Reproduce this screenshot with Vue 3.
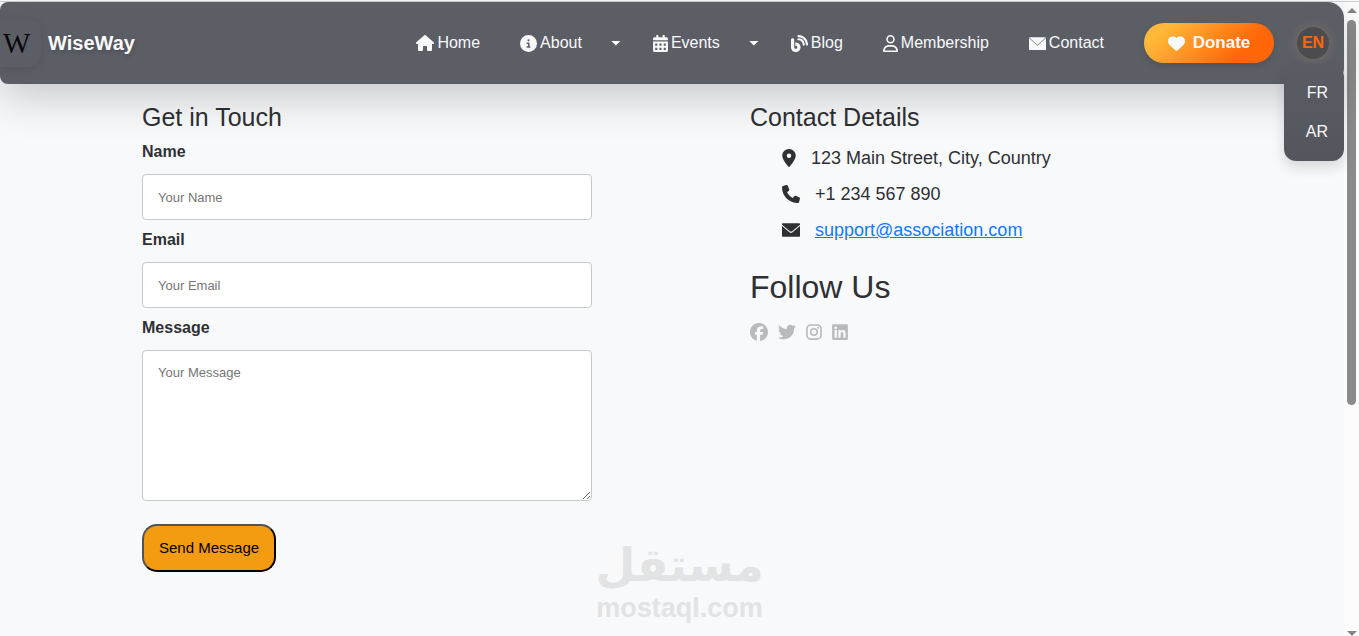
<script setup>
import { ref } from 'vue'

const house = 'M575.8 255.5c0 18-15 32.1-32 32.1h-32l.7 160.2c0 2.7-.2 5.4-.5 8.1V472c0 22.1-17.9 40-40 40H456c-1.1 0-2.2 0-3.3-.1c-1.4 .1-2.8 .1-4.2 .1H416 392c-22.1 0-40-17.9-40-40V448 384c0-17.7-14.3-32-32-32H256c-17.7 0-32 14.3-32 32v64 24c0 22.1-17.9 40-40 40H160 128.1c-1.5 0-3-.1-4.5-.2c-1.2 .1-2.4 .2-3.6 .2H104c-22.1 0-40-17.9-40-40V360c0-.9 0-1.9 .1-2.8V287.6H32c-18 0-32-14-32-32.1c0-9 3-17 10-24L266.4 8c7-7 15-8 22-8s15 2 21 7L564.8 231.5c8 7 12 15 11 24z'
const info = 'M256 512A256 256 0 1 0 256 0a256 256 0 1 0 0 512zM216 336h24V272H216c-13.3 0-24-10.7-24-24s10.7-24 24-24h48c13.3 0 24 10.7 24 24v88h8c13.3 0 24 10.7 24 24s-10.7 24-24 24H216c-13.3 0-24-10.7-24-24s10.7-24 24-24zm40-208a32 32 0 1 1 0 64 32 32 0 1 1 0-64z'
const calendar = 'M0 464c0 26.5 21.5 48 48 48h352c26.5 0 48-21.5 48-48V192H0zM64 256h64v64H64zM192 256h64v64h-64zM320 256h64v64h-64zM64 384h64v64H64zM192 384h64v64h-64zM320 384h64v64h-64zM400 64h-48V16c0-8.800-7.200-16-16-16h-32c-8.800 0-16 7.200-16 16v48H160V16c0-8.800-7.200-16-16-16h-32c-8.800 0-16 7.200-16 16v48H48C21.500 64 0 85.500 0 112v48h448v-48c0-26.500-21.500-48-48-48z'
const blog = 'M192 32c0 17.7 14.3 32 32 32c123.7 0 224 100.3 224 224c0 17.7 14.3 32 32 32s32-14.3 32-32C512 128.9 383.1 0 224 0c-17.7 0-32 14.3-32 32zm0 96c0 17.7 14.3 32 32 32c70.7 0 128 57.3 128 128c0 17.7 14.3 32 32 32s32-14.3 32-32c0-106-86-192-192-192c-17.7 0-32 14.3-32 32zM96 144c0-26.5-21.5-48-48-48S0 117.5 0 144V368c0 79.5 64.5 144 144 144s144-64.5 144-144s-64.5-144-144-144H128v96h16c26.5 0 48 21.5 48 48s-21.5 48-48 48s-48-21.5-48-48V144z'
const user = 'M304 128a80 80 0 1 0 -160 0 80 80 0 1 0 160 0zM96 128a128 128 0 1 1 256 0A128 128 0 1 1 96 128zM49.3 464H398.7c-8.9-63.3-63.3-112-129-112H178.3c-65.7 0-120.1 48.7-129 112zM0 482.3C0 383.8 79.8 304 178.3 304h91.4C368.2 304 448 383.8 448 482.3c0 16.400-13.300 29.700-29.700 29.700H29.700C13.300 512 0 498.700 0 482.300z'
const mailThin = 'M8 64H504V76L256 300L8 76zM0 88L256 322L512 88V448H0z'
const mail = 'M16 64H496L512 80V104L290 290Q256 314 222 290L0 104V80zM0 142L222 326Q256 350 290 326L512 142V432L496 448H16L0 432z'
const heart = 'M47.6 300.4L228.3 469.1c7.5 7 17.4 10.900 27.700 10.900s20.200-3.900 27.700-10.900L464.400 300.400c30.400-28.300 47.600-68 47.600-109.500v-5.800c0-69.900-50.500-129.500-119.400-141C347 36.500 300.600 51.400 268 84L256 96 244 84c-32.600-32.600-79-47.500-124.600-39.900C50.500 55.600 0 115.200 0 185.100v5.800c0 41.500 17.200 81.200 47.600 109.500z'
const pin = 'M215.7 499.2C267 435 384 279.4 384 192C384 86 298 0 192 0S0 86 0 192c0 87.4 117 243 168.3 307.2c12.3 15.3 35.1 15.3 47.4 0zM192 128a64 64 0 1 1 0 128 64 64 0 1 1 0-128z'
const phone = 'M164.9 24.6c-7.7-18.6-28-28.5-47.4-23.2l-88 24C12.1 30.2 0 46 0 64C0 311.4 200.6 512 448 512c18 0 33.8-12.1 38.6-29.5l24-88c5.3-19.4-4.6-39.7-23.2-47.4l-96-40c-16.3-6.8-35.2-2.1-46.3 11.6L304.7 368C234.3 334.7 177.3 277.7 144 207.3L193.3 167c13.7-11.2 18.4-30 11.6-46.3l-40-96z'
const facebook = 'M512 256C512 114.6 397.4 0 256 0S0 114.6 0 256C0 376 82.7 476.8 194.2 504.5V334.2H141.4V256h52.8V222.3c0-87.1 39.4-127.5 125-127.5c16.2 0 44.2 3.2 55.7 6.4V172c-6-.6-16.5-1-29.6-1c-42 0-58.2 15.9-58.2 57.2V256h83.6l-14.4 78.2H287V510.1C413.8 494.8 512 386.9 512 256z'
const twitter = 'M459.37 151.716c.325 4.548.325 9.097.325 13.645 0 138.72-105.583 298.558-298.558 298.558-59.452 0-114.68-17.219-161.137-47.106 8.447.974 16.568 1.299 25.34 1.299 49.055 0 94.213-16.568 130.274-44.832-46.132-.975-84.792-31.188-98.112-72.772 6.498.974 12.995 1.624 19.818 1.624 9.421 0 18.843-1.3 27.614-3.573-48.081-9.747-84.143-51.98-84.143-102.985v-1.299c13.969 7.797 30.214 12.67 47.431 13.319-28.264-18.843-46.781-51.005-46.781-87.391 0-19.492 5.197-37.36 14.294-52.954 51.655 63.675 129.3 105.258 216.365 109.807-1.624-7.797-2.599-15.918-2.599-24.04 0-57.828 46.782-104.934 104.934-104.934 30.213 0 57.502 12.67 76.67 33.137 23.715-4.548 46.456-13.32 66.599-25.34-7.798 24.366-24.366 44.833-46.132 57.827 21.117-2.273 41.584-8.122 60.426-16.243-14.292 20.791-32.161 39.308-52.628 54.253z'
const instagram = 'M132 32H316A132 132 0 0 1 448 164V348A132 132 0 0 1 316 480H132A132 132 0 0 1 0 348V164A132 132 0 0 1 132 32zM132 78A86 86 0 0 0 46 164V348A86 86 0 0 0 132 434H316A86 86 0 0 0 402 348V164A86 86 0 0 0 316 78zM224 141a115 115 0 1 1 0 230a115 115 0 1 1 0-230zM224 185a71 71 0 1 0 0 142a71 71 0 1 0 0-142zM343 108a29 29 0 1 1 0 58a29 29 0 1 1 0-58z'
const linkedin = 'M416 32H31.9C14.3 32 0 46.5 0 64.3v383.4C0 465.5 14.3 480 31.9 480H416c17.6 0 32-14.5 32-32.3V64.3c0-17.8-14.4-32.3-32-32.3zM135.4 416H69V202.2h66.5V416zm-33.2-243c-21.3 0-38.5-17.3-38.5-38.5S80.9 96 102.2 96c21.2 0 38.5 17.3 38.5 38.5 0 21.3-17.2 38.5-38.5 38.5zm282.1 243h-66.4V312c0-24.8-.5-56.7-34.5-56.7-34.6 0-39.9 27-39.9 54.9V416h-66.4V202.2h63.7v29.2h.9c8.9-16.8 30.6-34.5 62.2-34.5 66.5 0 78.9 43.8 78.9 100.9V416z'

const links = [
  { label: 'Home', path: house, box: '0 0 576 512', size: 'w18' },
  { label: 'About', path: info, box: '0 0 512 512', size: 'w17', menu: true },
  { label: 'Events', path: calendar, box: '0 0 448 512', size: 'w15', menu: true },
  { label: 'Blog', path: blog, box: '0 0 512 512', size: 'w17' },
  { label: 'Membership', path: user, box: '0 0 448 512', size: 'w15' },
  { label: 'Contact', path: mailThin, box: '0 0 512 512', size: 'w17' },
]
const languages = ['FR', 'AR']
const socials = [
  { label: 'Facebook', path: facebook, box: '0 0 512 512', size: 'w18' },
  { label: 'Twitter', path: twitter, box: '0 0 512 512', size: 'w18' },
  { label: 'Instagram', path: instagram, box: '0 0 448 512', size: 'w16' },
  { label: 'LinkedIn', path: linkedin, box: '0 0 448 512', size: 'w16' },
]
const form = ref({ name: '', email: '', message: '' })
</script>

<template>
  <div class="window">
    <div class="edge"></div>
    <div class="page">
      <header class="navbar">
        <a class="brand" href="#">
          <span class="logo">W</span>
          <span class="brand-name">WiseWay</span>
        </a>
        <nav class="links">
          <div v-for="l in links" :key="l.label" class="item">
            <a class="link" href="#">
              <svg class="icon" :class="l.size" :viewBox="l.box" aria-hidden="true"><path :d="l.path" fill-rule="evenodd" /></svg>
              <span>{{ l.label }}</span>
            </a>
            <button v-if="l.menu" class="toggle" type="button" :aria-label="l.label + ' menu'"></button>
          </div>
          <a class="donate" href="#">
            <svg class="icon w17" viewBox="0 0 512 512" aria-hidden="true"><path :d="heart" /></svg>
            <span>Donate</span>
          </a>
        </nav>
        <div class="language">
          <button class="current" type="button">EN</button>
          <div class="menu">
            <a v-for="c in languages" :key="c" href="#">{{ c }}</a>
          </div>
        </div>
      </header>

      <main class="content">
        <form class="column" @submit.prevent>
          <h2>Get in Touch</h2>
          <label for="name">Name</label>
          <input id="name" v-model="form.name" type="text" placeholder="Your Name" />
          <label for="email">Email</label>
          <input id="email" v-model="form.email" type="email" placeholder="Your Email" />
          <label for="message">Message</label>
          <textarea id="message" v-model="form.message" placeholder="Your Message"></textarea>
          <button class="send" type="submit">Send Message</button>
        </form>

        <section class="column">
          <h2>Contact Details</h2>
          <ul class="details">
            <li>
              <svg class="icon w14" viewBox="0 0 384 512" aria-hidden="true"><path :d="pin" fill-rule="evenodd" /></svg>
              <span>123 Main Street, City, Country</span>
            </li>
            <li>
              <svg class="icon w18" viewBox="0 0 512 512" aria-hidden="true"><path :d="phone" /></svg>
              <span>+1 234 567 890</span>
            </li>
            <li>
              <svg class="icon w18" viewBox="0 0 512 512" aria-hidden="true"><path :d="mail" /></svg>
              <a href="mailto:support@association.com">support@association.com</a>
            </li>
          </ul>
          <h3>Follow Us</h3>
          <div class="socials">
            <a v-for="s in socials" :key="s.label" href="#" :aria-label="s.label">
              <svg class="icon" :class="s.size" :viewBox="s.box" aria-hidden="true"><path :d="s.path" fill-rule="evenodd" /></svg>
            </a>
          </div>
        </section>
      </main>
    </div>

    <div class="scrollbar" aria-hidden="true">
      <svg class="arrow" viewBox="0 0 10 5"><path d="M5 0L10 5H0z" /></svg>
      <div class="track"><div class="thumb"></div></div>
      <svg class="arrow" viewBox="0 0 10 5"><path d="M0 0H10L5 5z" /></svg>
    </div>

    <div class="watermark">
      <span class="mark-ar" lang="ar" dir="rtl">مستقل</span>
      <span class="mark-en">mostaql.com</span>
    </div>
  </div>
</template>

<style>
body {
  margin: 0;
  background: #f8f9fb;
}
</style>

<style scoped>
* {
  box-sizing: border-box;
}
.window {
  position: relative;
  display: grid;
  grid-template-columns: 1fr 15px;
  grid-template-rows: 2px 1fr;
  min-height: 100vh;
  font-family: "Liberation Sans", Arial, sans-serif;
  font-size: 16px;
  line-height: 24px;
  color: #2f3033;
}
.edge {
  grid-column: 1 / -1;
  background: #fafbfc;
  border-bottom: 1px solid #cfd2d4;
}
.icon {
  display: block;
  flex: none;
  fill: currentColor;
}
.w14 { width: 14px; height: 18px; }
.w15 { width: 15px; height: 17px; }
.w16 { width: 16px; height: 18px; }
.w17 { width: 17px; height: 17px; }
.w18 { width: 18px; height: 18px; }

.navbar {
  position: relative;
  display: flex;
  align-items: center;
  height: 82px;
  padding-right: 15px;
  border-radius: 8px 16px 16px 8px;
  background: #5c5e66;
  color: #f8f9fa;
  box-shadow: 0 16px 40px rgba(0, 0, 0, 0.18);
}
.navbar a {
  color: inherit;
  text-decoration: none;
}
.brand {
  display: flex;
  align-items: center;
  gap: 7px;
  margin-right: auto;
}
.navbar .logo {
  width: 41px;
  padding-left: 3px;
  border-radius: 0 14px 14px 0;
  font-family: "Liberation Serif", "Times New Roman", serif;
  font-size: 29px;
  line-height: 48px;
  color: #08090a;
  box-shadow: 0 2px 8px rgba(0, 0, 0, 0.1);
}
.brand-name {
  font-size: 20px;
  font-weight: bold;
  text-shadow: 1px 2px 4px rgba(0, 0, 0, 0.2);
}
.links {
  display: flex;
  align-items: center;
  gap: 40px;
}
.item {
  display: flex;
  align-items: center;
}
.link {
  display: flex;
  align-items: center;
  gap: 3px;
}
.toggle {
  width: 10px;
  height: 5px;
  margin: 0 -8px 0 29px;
  padding: 0;
  border: 0;
  background: #ffffff;
  clip-path: polygon(0 0, 100% 0, 50% 100%);
}
.donate {
  display: flex;
  align-items: center;
  justify-content: center;
  gap: 8px;
  width: 130px;
  height: 40px;
  border-radius: 20px;
  background: linear-gradient(135deg, #ffb83a 15%, #ff6608 75%);
  font-size: 17px;
  font-weight: bold;
  box-shadow: 0 3px 6px rgba(0, 0, 0, 0.12);
}
.language {
  margin-left: 23px;
}
.current {
  display: block;
  width: 32px;
  height: 32px;
  padding: 0;
  border: 0;
  border-radius: 50%;
  background: #4c4c4e;
  color: #ff6608;
  font: bold 16px/32px "Liberation Sans", Arial, sans-serif;
  box-shadow: 0 0 8px 2px rgba(150, 125, 105, 0.4);
}
.menu {
  position: absolute;
  top: 63px;
  right: 0;
  display: flex;
  flex-direction: column;
  gap: 15px;
  width: 60px;
  padding: 16px 16px 17px;
  border-radius: 12px;
  background: linear-gradient(#5a5c64, #54565d);
  text-align: right;
  box-shadow: 0 6px 14px rgba(0, 0, 0, 0.14);
}

.content {
  display: grid;
  grid-template-columns: 1fr 1fr;
  padding: 14px 65px 40px 63px;
}
.column {
  justify-self: center;
  width: 100%;
  max-width: 450px;
}
h2,
h3 {
  margin: 0;
  font-weight: normal;
}
h2 {
  margin-bottom: 4px;
  font-size: 25px;
  line-height: 38px;
}
h3 {
  margin-top: 20px;
  font-size: 32px;
  line-height: 38px;
}
label {
  display: block;
  margin-bottom: 10px;
  font-weight: bold;
}
input,
textarea {
  display: block;
  width: 100%;
  padding: 14px 15px;
  border: 1px solid #c8c9cb;
  border-radius: 4px;
  background: #ffffff;
  font: 13px/16px "Liberation Sans", Arial, sans-serif;
}
input {
  height: 46px;
  margin-bottom: 8px;
}
textarea {
  height: 151px;
  resize: both;
}
input::placeholder,
textarea::placeholder {
  color: #757575;
}
.send {
  margin-top: 23px;
  padding: 0 15px;
  border: 2px outset #000000;
  border-radius: 15px;
  background: #f39c12;
  color: #000000;
  font: 15px/44px "Liberation Sans", Arial, sans-serif;
}
.details {
  margin: 0;
  padding: 0 0 0 32px;
  list-style: none;
  font-size: 18px;
}
.details li {
  display: flex;
  align-items: center;
  gap: 15px;
  height: 36px;
}
.details a {
  color: #0d7bff;
}
.socials {
  display: flex;
  align-items: center;
  gap: 10px;
  margin-top: 17px;
}
.socials a {
  color: #b9babb;
}

.scrollbar {
  display: flex;
  flex-direction: column;
  align-items: center;
  padding-top: 6px;
  background: #fcfcfc;
}
.arrow {
  width: 10px;
  height: 5px;
  fill: #858585;
}
.track {
  flex: 1;
  width: 9px;
  padding-top: 7px;
}
.thumb {
  height: 63%;
  border-radius: 5px;
  background: #8b8b8b;
}

.watermark {
  position: absolute;
  left: 0;
  right: 0;
  bottom: 12px;
  display: flex;
  flex-direction: column;
  align-items: center;
  color: #e1e3e4;
  font-weight: bold;
  pointer-events: none;
}
.mark-ar {
  font-family: "DejaVu Sans", sans-serif;
  font-size: 46px;
  line-height: 54px;
}
.mark-en {
  font-size: 27px;
  line-height: 32px;
}
</style>
